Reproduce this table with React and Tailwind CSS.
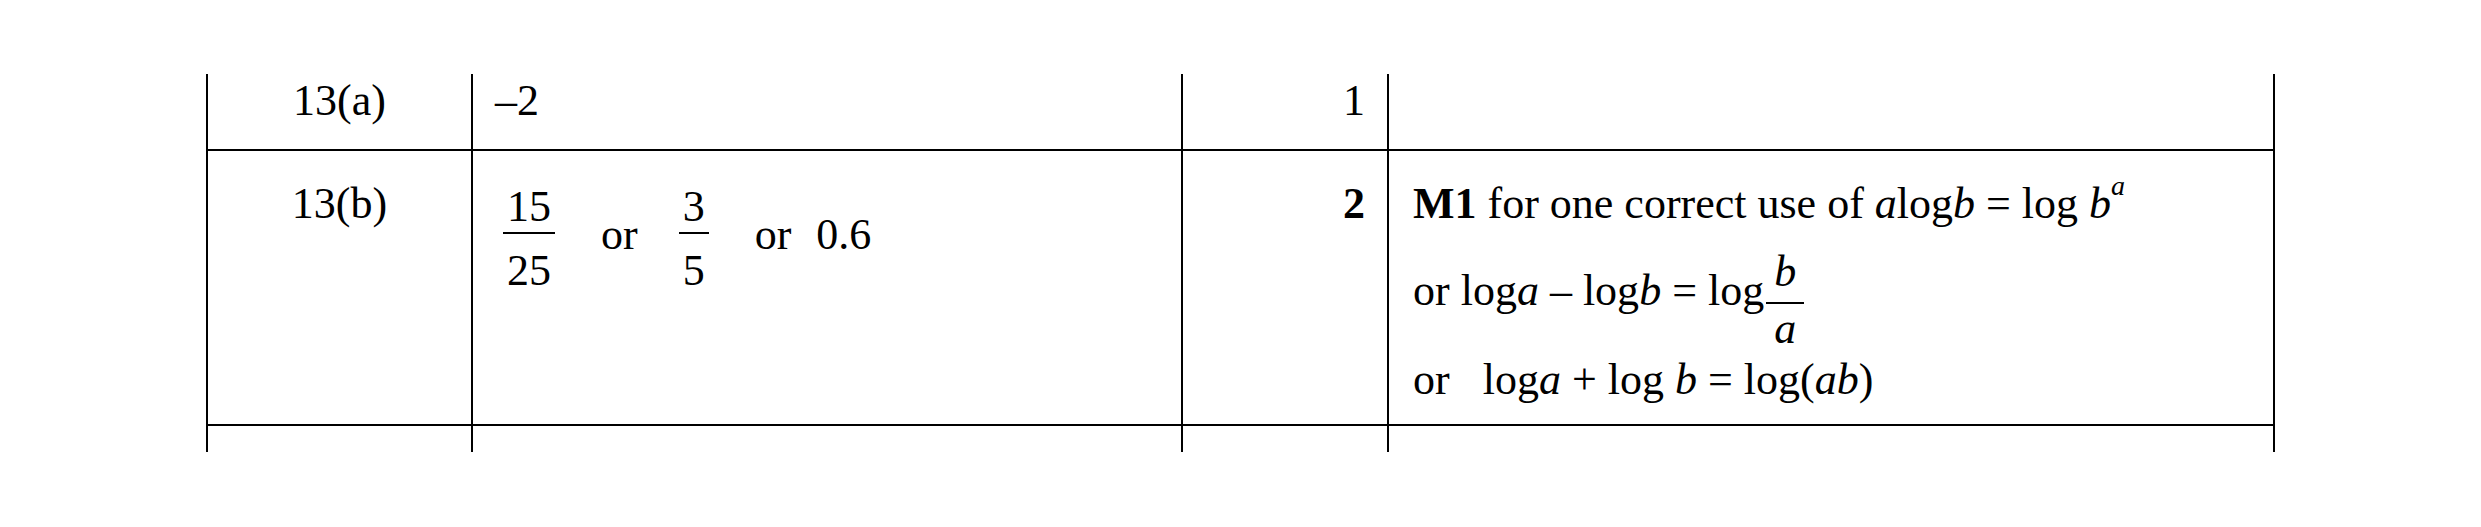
import React from "react";

function Frac({ num, den, barMt, denMt, px = "px-[4px]" }) {
  return (
    <span className="inline-flex flex-col items-stretch">
      <span className={`block text-center leading-[44px] ${px}`}>{num}</span>
      <span className={`block h-[2px] bg-black ${barMt}`} />
      <span className={`block text-center leading-[44px] ${px} ${denMt}`}>{den}</span>
    </span>
  );
}

export default function App() {
  const cell = "border-l-2 border-black";
  return (
    <div className="min-h-[527px] w-[2481px] bg-white text-black font-['Liberation_Serif',serif] text-[44px] leading-[44px]">
      <div className="pt-[74px] pl-[206px]">
        <div className="grid grid-cols-[265px_710px_206px_888px]">
          {/* Row 1 */}
          <div className={`${cell} border-b-2 h-[77px] pt-[5px] text-center`}>13(a)</div>
          <div className={`${cell} border-b-2 h-[77px] pt-[5px] pl-[22px]`}>–2</div>
          <div className={`${cell} border-b-2 h-[77px] pt-[5px] pr-[22px] text-right`}>1</div>
          <div className={`${cell} border-r-2 border-b-2 h-[77px]`} />

          {/* Row 2 */}
          <div className={`${cell} border-b-2 h-[275px] pt-[31px] text-center`}>13(b)</div>
          <div className={`${cell} border-b-2 h-[275px] pt-[34px] pl-[30px]`}>
            <div className="flex items-start">
              <Frac num="15" den="25" barMt="mt-[3px]" denMt="mt-[15px]" />
              <span className="ml-[46px] mt-[28px]">or</span>
              <span className="ml-[41px]">
                <Frac num="3" den="5" barMt="mt-[3px]" denMt="mt-[15px]" />
              </span>
              <span className="ml-[46px] mt-[28px]">or</span>
              <span className="ml-[25px] mt-[28px]">0.6</span>
            </div>
          </div>
          <div className={`${cell} border-b-2 h-[275px] pt-[31px] pr-[22px] text-right font-bold`}>2</div>
          <div className={`${cell} border-r-2 border-b-2 h-[275px] pt-[31px] pl-[24px]`}>
            <div className="whitespace-nowrap">
              <span className="font-bold">M1</span> for one correct use of <i>a</i>log<i>b</i> = log <i>b</i>
              <sup className="text-[28px] leading-none align-[9px] italic">a</sup>
            </div>
            <div className="mt-[24px] flex items-start whitespace-nowrap">
              <span className="mt-[19px]">
                or log<i>a</i> – log<i>b</i> = log
              </span>
              <span className="ml-[2px]">
                <Frac num={<i>b</i>} den={<i>a</i>} barMt="mt-[8px]" denMt="mt-[3px]" px="px-[8px]" />
              </span>
            </div>
            <div className="mt-[7px] whitespace-nowrap">
              or<span className="ml-[33px]">log<i>a</i> + log <i>b</i> = log(<i>ab</i>)</span>
            </div>
          </div>

          {/* Row 3 */}
          <div className={`${cell} h-[26px]`} />
          <div className={`${cell} h-[26px]`} />
          <div className={`${cell} h-[26px]`} />
          <div className={`${cell} border-r-2 h-[26px]`} />
        </div>
      </div>
    </div>
  );
}
